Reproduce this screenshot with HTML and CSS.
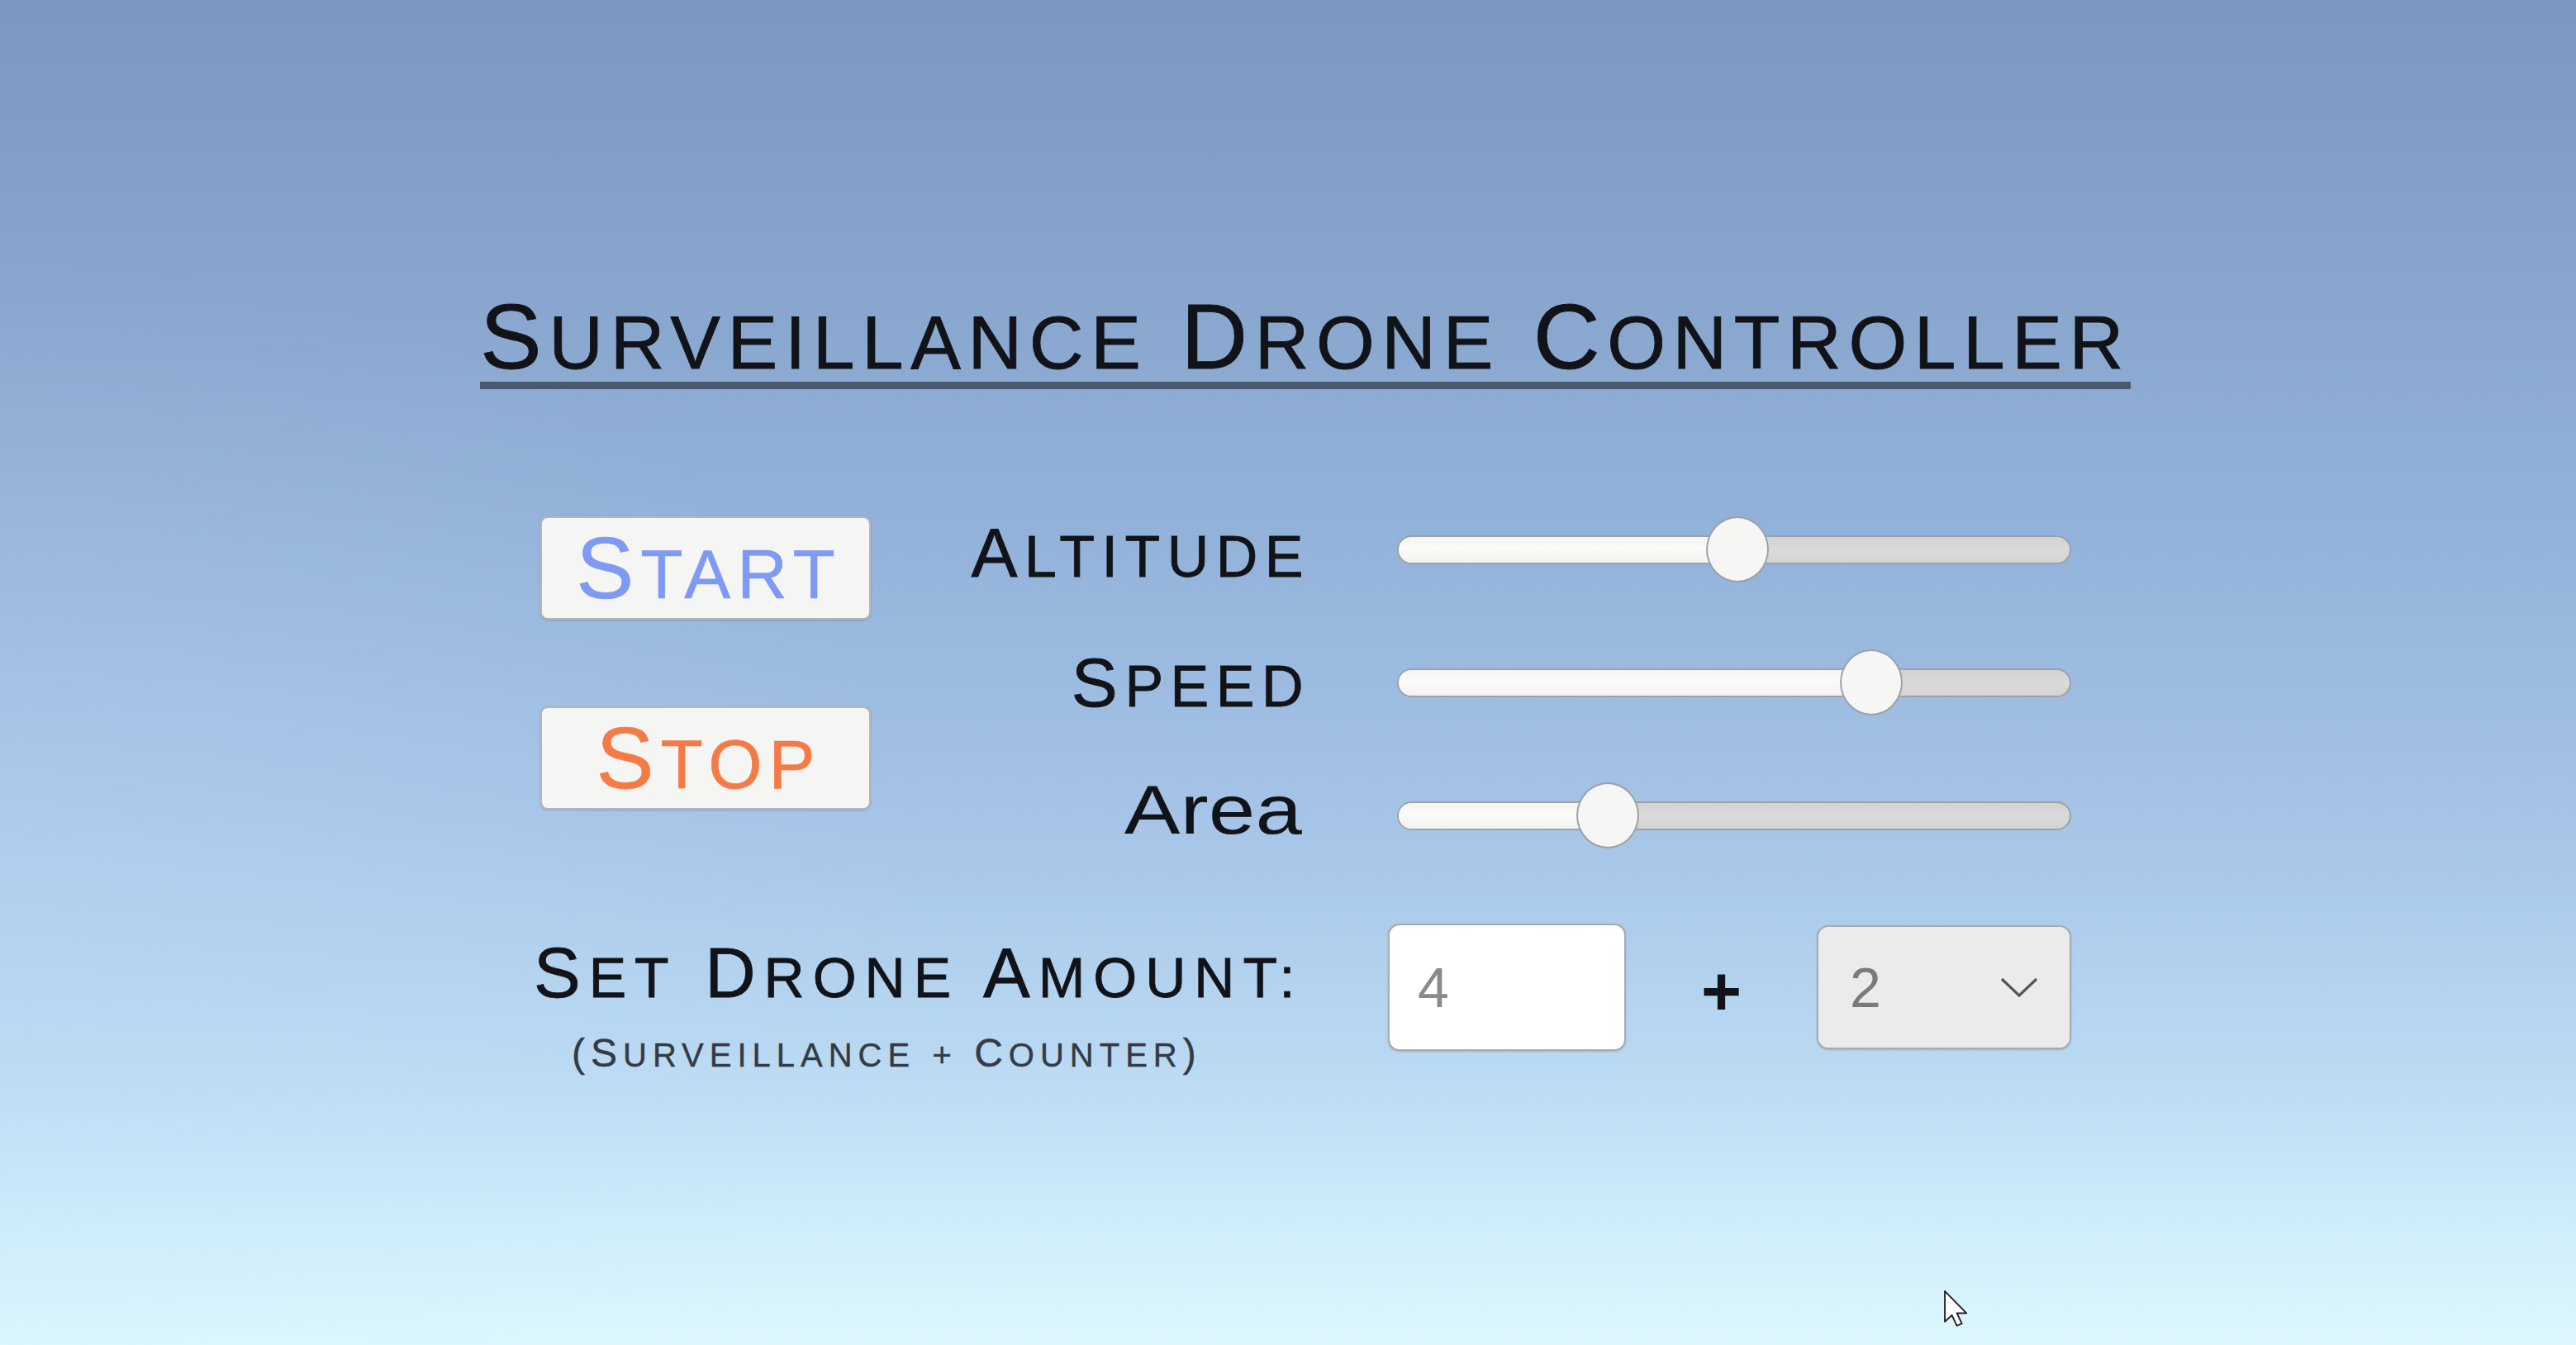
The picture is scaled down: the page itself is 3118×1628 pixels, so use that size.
FILE: index.html
```html
<!DOCTYPE html>
<html lang="en">
<head>
<meta charset="utf-8">
<title>Surveillance Drone Controller</title>
<link rel="stylesheet" href="styles.css">
</head>
<body>
<main class="app">
  <h1 class="title">S<span class="sm">urveillance</span> D<span class="sm">rone</span> C<span class="sm">ontroller</span></h1>

  <section class="controls">
    <div class="buttons">
      <button class="btn start">S<span class="sm">tart</span></button>
      <button class="btn stop">S<span class="sm">top</span></button>
    </div>
    <div class="sliders">
      <div class="label altitude">A<span class="sm">ltitude</span></div>
      <div class="slider"><div class="fill" style="width:50.5%"></div><div class="handle" style="left:50.5%"></div></div>
      <div class="label">S<span class="sm">peed</span></div>
      <div class="slider"><div class="fill" style="width:70.5%"></div><div class="handle" style="left:70.5%"></div></div>
      <div class="label area">Area</div>
      <div class="slider"><div class="fill" style="width:31.1%"></div><div class="handle" style="left:31.1%"></div></div>
    </div>
  </section>

  <section class="drone">
    <div class="drone-text">
      <h2 class="drone-title">S<span class="sm">et</span> D<span class="sm">rone</span> A<span class="sm">mount:</span></h2>
      <p class="drone-sub">(S<span class="sm">urveillance</span> <span class="sm">+</span> C<span class="sm">ounter</span>)</p>
    </div>
    <div class="drone-inputs">
      <input class="num" type="text" value="4" readonly>
      <span class="plus">+</span>
      <div class="select">
        <span class="select-value">2</span>
        <svg class="chevron" width="46" height="24" viewBox="0 0 46 24"><path d="M2 2 L23 22 L44 2" fill="none" stroke="#555" stroke-width="3.2"/></svg>
      </div>
    </div>
  </section>
</main>
<svg class="cursor" width="32" height="46" viewBox="0 0 26 38"><path d="M1.5 1.5 L1.5 32 L8.5 25.5 L13.5 36 L18.5 34 L13.5 23.5 L23 23.5 Z" fill="#fff" stroke="#222" stroke-width="1.6" stroke-linejoin="round"/></svg>
</body>
</html>
```

FILE: styles.css
```css
html, body {
  margin: 0;
  padding: 0;
}

body {
  width: 3118px;
  height: 1628px;
  overflow: hidden;
  position: relative;
  font-family: "Liberation Sans", Arial, sans-serif;
  color: #111318;
  background:
    radial-gradient(ellipse 1600px 1100px at 0% 65%, rgba(200, 225, 250, 0.25), rgba(200, 225, 250, 0) 70%),
    linear-gradient(180deg, #7a97bf 0%, #86a4cc 20%, #95b4db 42%, #a4c3e6 60%, #b8d8f2 78%, #cdebfa 90%, #ddf7fd 100%);
}

.app {
  padding: 354px 0 0 581px;
}

.sm {
  text-transform: uppercase;
  line-height: 1;
}

/* Title */
.title {
  display: block;
  width: fit-content;
  margin: 0;
  font-weight: normal;
  font-size: 112px;
  line-height: 108px;
  letter-spacing: 8.6px;
  border-bottom: 9px solid #4a586d;
  white-space: nowrap;
  -webkit-text-stroke: 0.8px #111318;
}

.title .sm {
  font-size: 91px;
}

/* Controls */
.controls {
  display: flex;
  margin: 154px 0 0 73px;
}

.buttons {
  display: flex;
  flex-direction: column;
  gap: 105px;
  width: 400px;
}

.btn {
  width: 400px;
  height: 125px;
  box-sizing: border-box;
  margin: 0;
  padding: 0 0 0 8px;
  border: 2px solid #b4b6ba;
  border-radius: 9px;
  background: #f5f5f4;
  box-shadow: 0 1px 2px rgba(60, 70, 90, 0.25);
  font-family: "Liberation Sans", Arial, sans-serif;
  font-size: 105px;
  line-height: 1;
  letter-spacing: 8px;
  cursor: pointer;
}

.btn .sm {
  font-size: 84px;
}

.start {
  color: #7f9af2;
  -webkit-text-stroke: 0.6px #7f9af2;
}

.stop {
  color: #f47b45;
  -webkit-text-stroke: 0.6px #f47b45;
}

.sliders {
  display: grid;
  grid-template-columns: 526px 816px;
  grid-auto-rows: 80px;
  column-gap: 111px;
  row-gap: 81px;
  align-items: center;
}

.label {
  justify-self: end;
  font-size: 84px;
  line-height: 80px;
  letter-spacing: 8.5px;
  margin-right: -6px;
  white-space: nowrap;
  -webkit-text-stroke: 0.8px #111318;
}

.label .sm {
  font-size: 70px;
}

.label.altitude {
  padding-top: 8px;
}

.label.area {
  letter-spacing: 0.5px;
  margin-right: 4px;
  padding-bottom: 14px;
  transform: scaleX(1.2);
  transform-origin: right center;
  -webkit-text-stroke: 0.2px #111318;
}

.slider {
  position: relative;
  height: 35px;
  box-sizing: border-box;
  border: 2px solid #9ea1a6;
  border-radius: 18px;
  background: linear-gradient(180deg, #d2d2d2 0%, #dadada 50%, #d4d4d4 100%);
}

.fill {
  height: 100%;
  border-radius: 16px 0 0 16px;
  background: linear-gradient(180deg, #f3f3f2 0%, #fbfbfa 45%, #f2f2f1 100%);
}

.handle {
  position: absolute;
  top: 50%;
  width: 76px;
  height: 80px;
  box-sizing: border-box;
  transform: translate(-50%, -50%);
  border: 2px solid #9ea1a6;
  border-radius: 50%;
  background: #f6f6f5;
}

/* Drone amount */
.drone {
  display: flex;
  margin: 91px 0 0 65px;
}

.drone-text {
  width: 934px;
  padding-top: 20px;
}

.drone-title {
  margin: 0;
  font-weight: normal;
  font-size: 85px;
  line-height: 80px;
  letter-spacing: 10px;
  white-space: nowrap;
  -webkit-text-stroke: 0.8px #111318;
}

.drone-title .sm {
  font-size: 68px;
}

.drone-sub {
  margin: 33px 0 0 46px;
  font-size: 48px;
  line-height: 48px;
  letter-spacing: 7px;
  color: #353a44;
  white-space: nowrap;
  -webkit-text-stroke: 0.4px #353a44;
}

.drone-sub .sm {
  font-size: 40px;
}

.drone-inputs {
  display: flex;
  align-items: center;
  margin-left: 100px;
  height: 154px;
}

.num {
  width: 288px;
  height: 154px;
  box-sizing: border-box;
  margin: 0;
  padding: 0 0 0 34px;
  border: 2px solid #a8abb0;
  border-radius: 14px;
  background: #ffffff;
  box-shadow: 0 1px 2px rgba(60, 70, 90, 0.25);
  font-family: "Liberation Sans", Arial, sans-serif;
  font-size: 68px;
  color: #8a8a8a;
  outline: none;
}

.plus {
  width: 231px;
  padding-top: 10px;
  text-align: center;
  font-size: 84px;
  font-weight: bold;
  line-height: 1;
  color: #111318;
}

.select {
  width: 308px;
  height: 150px;
  box-sizing: border-box;
  display: flex;
  align-items: center;
  justify-content: space-between;
  padding: 0 38px 0 38px;
  border: 2px solid #a8abb0;
  border-radius: 14px;
  background: #ebebeb;
  box-shadow: 0 1px 2px rgba(60, 70, 90, 0.25);
  font-size: 68px;
  color: #7a7a7a;
}

.chevron {
  display: block;
}

.cursor {
  position: absolute;
  left: 2352px;
  top: 1561px;
}
```
